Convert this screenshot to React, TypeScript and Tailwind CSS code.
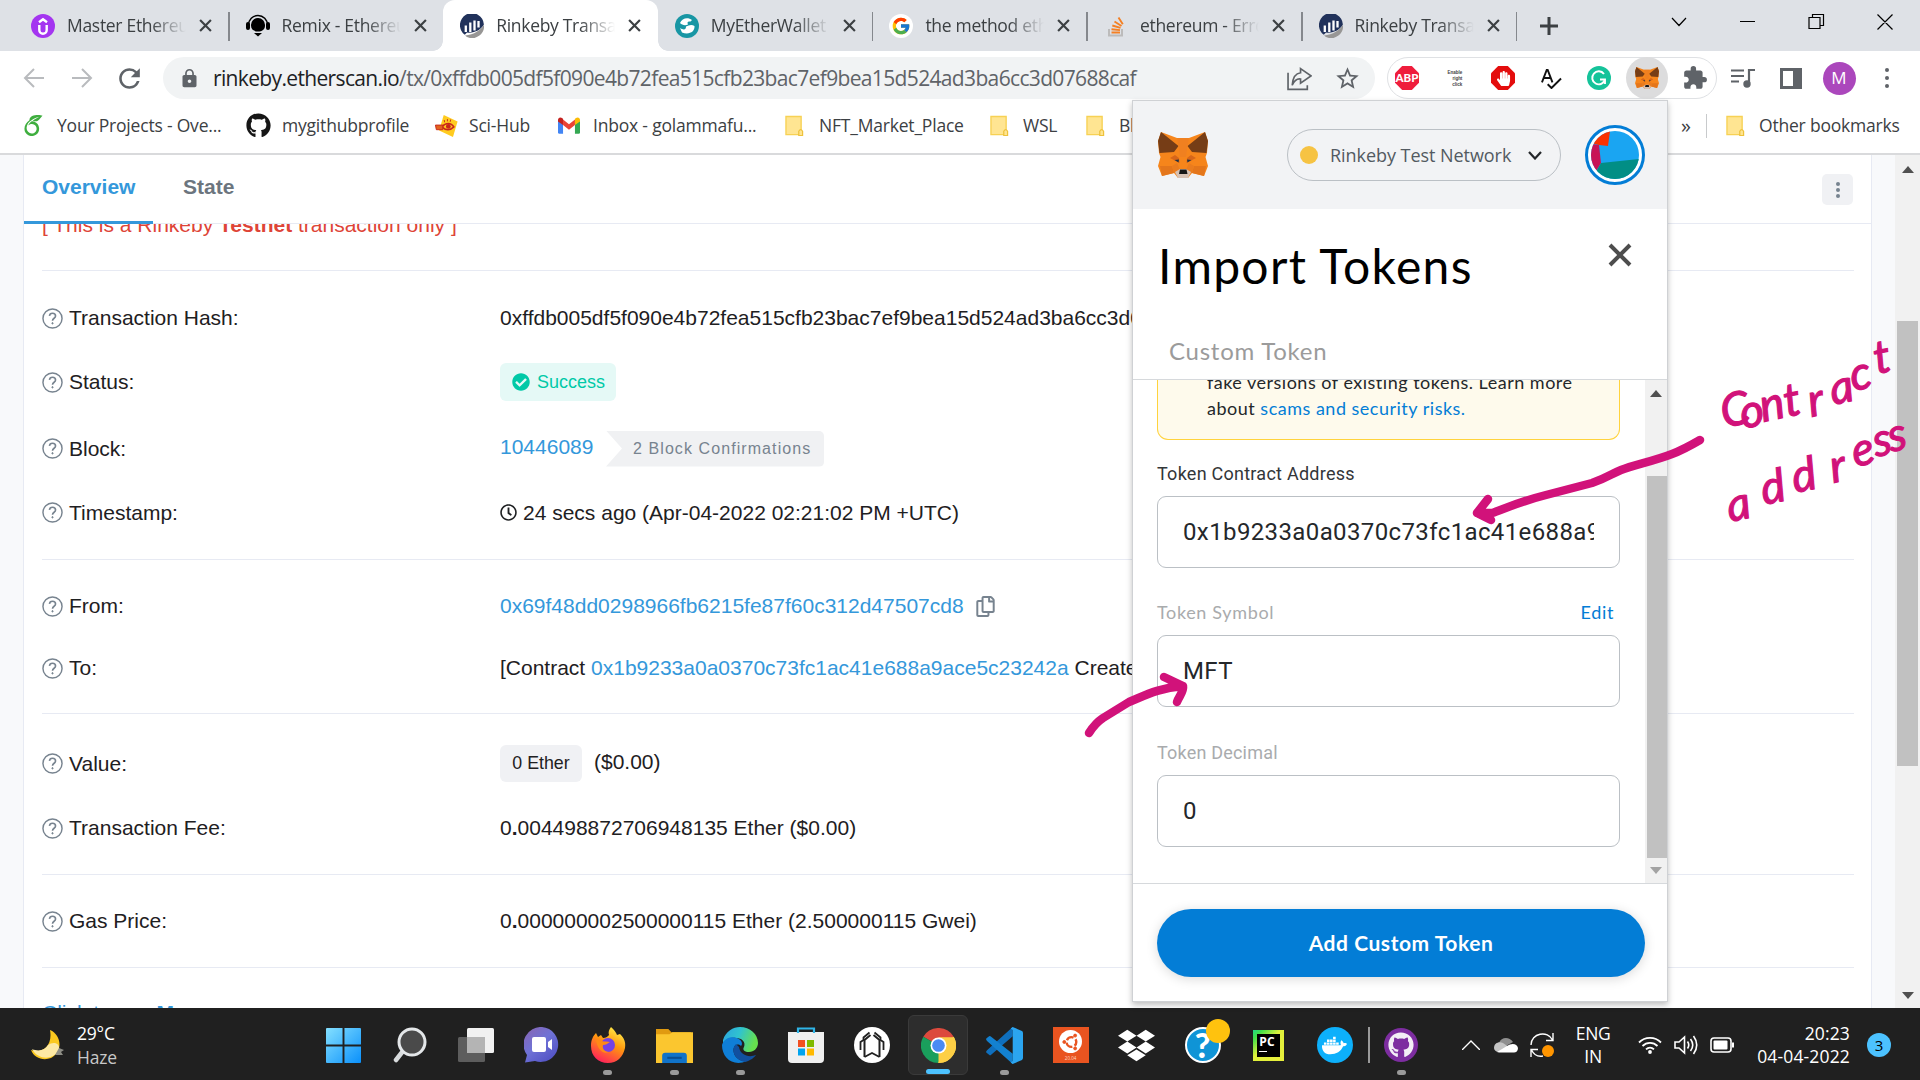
import React from "react";
import { FaGithub, FaDropbox, FaDocker, FaHandPaper, FaCheckCircle, FaRegCopy, FaRegClock } from "react-icons/fa";
import { FcGoogle } from "react-icons/fc";
import { SiOverleaf } from "react-icons/si";
import { MdExtension, MdLock, MdRefresh, MdStarBorder } from "react-icons/md";

const UI = "font-['Open_Sans','Noto_Sans',sans-serif]";

/* ---------- logos ---------- */

function Fox({ className }: { className: string }) {
  return (
    <svg viewBox="0 0 50 46" className={className} preserveAspectRatio="none">
      <path d="M3 0 19 6H31L47 0 50 9 49 21 47.500 25 50 34 46 44 34 41 30 46H20L16 41 4 44 0 34 2.500 25 1 21 0 9Z" fill="#f6851b" />
      <path d="M3 0 20.500 14 16 20 1.500 21 0 9ZM47 0 29.500 14 34 20 48.500 21 50 9Z" fill="#763d16" />
      <path d="M19 6H31L29.500 14 28 25H22L20.500 14Z" fill="#f08020" />
      <path d="M12 26 17 23 21 26 21.500 31ZM38 26 33 23 29 26 28.500 31Z" fill="#d7661a" />
      <path d="M2 34H14L16 41 4 44ZM48 34H36L34 41 46 44Z" fill="#e4761b" />
      <path d="M14 34 19 31 22 38 16 41ZM36 34 31 31 28 38 34 41Z" fill="#ea7c1e" />
      <path d="M16.500 28 21 27.500 20.500 30.500ZM33.500 28 29 27.500 29.500 30.500Z" fill="#233447" />
      <path d="M17 40 22 37H28L33 40 30 46H20Z" fill="#d7c1b3" />
      <path d="M22 37.500H28.500L29.500 42H21Z" fill="#161616" />
    </svg>
  );
}

function Etherscan() {
  return (
    <svg viewBox="0 0 24 24" className="size-6">
      <path d="M4.800 20.800A12 12 0 1 1 23.900 10.500C21 16 14 19.500 7 18.500Z" fill="#21325b" />
      <path d="M5 21.500C14 21 21 16 24 10.800A12 12 0 0 1 7 23Z" fill="#979695" />
      <path d="M5.800 18V11.500M10.300 18V8.500M14.500 16.500V6.500M18.500 13.500V7" stroke="#fff" strokeWidth="2.300" />
    </svg>
  );
}

function Folder() {
  return (
    <svg viewBox="0 0 20 22" className="h-[22px] w-[19px] shrink-0">
      <path d="M1 1H17V20H1Z" fill="#ffe592" stroke="#f7d154" strokeWidth="1.400" />
      <path d="M14.500 21V16.500Q16.500 13 18.500 16.500V21Z" fill="#ffe592" stroke="#eec23c" strokeWidth="1.300" />
    </svg>
  );
}

function Udemy() {
  return (
    <svg viewBox="0 0 24 24" className="size-6">
      <circle cx="12" cy="12" r="12" fill="#a435f0" />
      <path d="M8.300 11v5a3.700 3.700 0 0 0 7.400 0v-5M8 8.300 12 5.300 16 8.300" stroke="#fff" strokeWidth="2.400" fill="none" />
    </svg>
  );
}

function Remix() {
  return (
    <svg viewBox="0 0 24 24" className="size-6">
      <path d="M12 4a7 7 0 0 1 7 7.500c0 4-3 6-7 6s-7-2-7-6A7 7 0 0 1 12 4Z" />
      <path d="M2.500 11a9.500 9.500 0 0 1 19 0" stroke="#000" strokeWidth="1.500" fill="none" />
      <rect y="8" width="4" height="8" rx="2" />
      <rect x="20" y="8" width="4" height="8" rx="2" />
      <path d="M8 19 12 22.500 16 19Z" />
    </svg>
  );
}

function Mew() {
  return (
    <svg viewBox="0 0 24 24" className="size-6">
      <circle cx="12" cy="12" r="12" fill="#1896a4" />
      <path d="M5 9C7 4 13 3 17 6L15.500 7.500C12.500 7 12 8 13 10.500 10 12 7 11 5 9ZM19.500 12C20 18 14 21 7 18.500L5 14C9 16.500 11 15.500 11 12.500 14 11 17 10.500 19.500 12Z" fill="#fff" />
    </svg>
  );
}

function Gmail() {
  return (
    <svg viewBox="0 0 24 18" className="h-[17px] w-[22px] shrink-0">
      <path d="M0 3V16.500Q0 18 1.500 18H5.500V7.500Z" fill="#4285f4" />
      <path d="M24 3V16.500Q24 18 22.500 18H18.500V7.500Z" fill="#34a853" />
      <path d="M5.500 2.500 12 7.500 18.500 2.500V8.500L12 13.500 5.500 8.500Z" fill="#ea4335" />
      <path d="M0 3C0 .3 2.500-.6 4.500.9L5.500 1.800V8.500L0 4.500Z" fill="#c5221f" />
      <path d="M24 3C24 .3 21.500-.6 19.500.9L18.500 1.800V8.500L24 4.500Z" fill="#fbbc04" />
    </svg>
  );
}

function SciHub() {
  return (
    <svg viewBox="0 0 24 26" className="h-[24px] w-[25px] shrink-0">
      <path d="M9 1 24 8 19 25 4 18Z" fill="#ffcb1f" />
      <path d="M7 14C11 9 17 9 20 14 16 18 11 18 7 14Z" fill="none" stroke="#c8261b" strokeWidth="1.700" />
      <circle cx="14" cy="13.500" r="2.600" fill="#c8261b" />
      <path d="M0 12H8V17H1ZM10 9 9.500 6.500M13 8V5.500M16 8.500 16.500 6" fill="#e2641d" stroke="#c8261b" />
    </svg>
  );
}

/* ---------- browser chrome ---------- */

const tabs = [
  { icon: <Udemy />, title: "Master Ethereum" },
  { icon: <Remix />, title: "Remix - Ethereum" },
  { icon: <Etherscan />, title: "Rinkeby Transaction", active: true },
  { icon: <Mew />, title: "MyEtherWallet |" },
  {
    icon: (
      <span className="flex size-6 items-center justify-center rounded-full bg-white">
        <FcGoogle size={20} />
      </span>
    ),
    title: "the method eth_",
  },
  {
    icon: (
      <svg viewBox="0 0 24 24" className="size-6">
        <path d="M5 15V21.500H18V15" fill="none" stroke="#bcbbbb" strokeWidth="2" />
        <path d="M7.500 18.500H16M7.500 15.200 16 16.100M8.300 11.500 16.500 13.800M10.500 7.500 17.500 12M14.500 3.500 18.800 10.300" stroke="#f48024" strokeWidth="1.900" />
      </svg>
    ),
    title: "ethereum - Error",
  },
  { icon: <Etherscan />, title: "Rinkeby Transaction" },
];

function Close({ className = "size-3" }: { className?: string }) {
  return (
    <svg viewBox="0 0 12 12" className={className}>
      <path d="M1 1 11 11M11 1 1 11" stroke="currentColor" strokeWidth="2" />
    </svg>
  );
}

function TabStrip() {
  return (
    <div className="flex h-[51px] bg-[#dee1e6] pl-[14px]">
      {tabs.map((t, i) => (
        <div
          key={i}
          className={`relative flex h-full w-[214.600px] shrink-0 items-center pl-[17px] ${t.active ? "rounded-t-xl bg-white" : ""}`}
        >
          {t.active && (
            <>
              <i className="absolute bottom-0 -left-[10px] size-[10px] bg-[radial-gradient(circle_at_0_0,transparent_9.500px,#fff_10px)]" />
              <i className="absolute -right-[10px] bottom-0 size-[10px] bg-[radial-gradient(circle_at_100%_0,transparent_9.500px,#fff_10px)]" />
            </>
          )}
          {t.icon}
          <span
            className={`ml-[12px] w-[119px] overflow-hidden text-[17.500px] tracking-[-0.300px] whitespace-nowrap text-[#3c4043] [mask-image:linear-gradient(90deg,#000_70%,transparent)] ${UI}`}
          >
            {t.title}
          </span>
          <Close className="ml-[13px] size-[13px] text-[#3c4043]" />
          {i !== 1 && i !== 2 && <span className="absolute top-3 right-[-1px] h-[29px] w-[1.500px] bg-[#85888d]" />}
        </div>
      ))}
      <svg viewBox="0 0 18 18" className="mt-[17px] ml-[24px] size-[18px]">
        <path d="M9 0V18M0 9H18" stroke="#3c4043" strokeWidth="3" />
      </svg>
      <svg viewBox="0 0 240 20" className="mt-3 ml-[102px] h-5 w-[240px]" fill="none" stroke="#000" strokeWidth="1.200">
        <path d="M12 6 19 13.500 26 6M80 9.500H95M149 5.500H160V16.500H149ZM152.500 5.500V2.500H163.500V13.500H160M217.500 2.500 232.500 17.500M232.500 2.500 217.500 17.500" />
      </svg>
    </div>
  );
}

function Slot({ children, className = "" }: { children: React.ReactNode; className?: string }) {
  return <span className={`flex h-[42px] w-[48px] shrink-0 items-center justify-center ${className}`}>{children}</span>;
}

function Toolbar() {
  return (
    <div className="flex h-[54px] items-center bg-white text-[#5f6368]">
      <div className="flex w-[163px] items-center pl-[23px]">
        <svg viewBox="0 0 22 20" className="h-[20px] w-[22px]" fill="none" stroke="#b9bbbe" strokeWidth="2">
          <path d="M21 10H2M11 1 2 10 11 19" />
        </svg>
        <svg viewBox="0 0 22 20" className="ml-[26px] h-[20px] w-[22px]" fill="none" stroke="#b9bbbe" strokeWidth="2">
          <path d="M1 10H20M11 1 20 10 11 19" />
        </svg>
        <MdRefresh size={31} className="ml-[21px]" />
      </div>
      <div className="flex h-[42px] w-[1212px] items-center rounded-full bg-[#f1f3f4] pl-[16px]">
        <MdLock size={21} />
        <span className={`mt-[1px] ml-[13px] w-[1062px] text-[21px] tracking-[-0.650px] whitespace-nowrap ${UI}`}>
          <span className="text-[#202124]">rinkeby.etherscan.io</span>
          /tx/0xffdb005df5f090e4b72fea515cfb23bac7ef9bea15d524ad3ba6cc3d07688caf
        </span>
        <Slot>
          <svg viewBox="0 0 24 24" className="size-[25px]" fill="none" stroke="currentColor" strokeWidth="1.600">
            <path d="M1 6.500V22.500H19.500V18.500M13 2.500 23 9.500 13 16.500V12.500C10 12 7 14 5 18.500 5.500 12 8 7 13 6.500Z" />
          </svg>
        </Slot>
        <Slot>
          <MdStarBorder size={27} />
        </Slot>
      </div>
      <div className="ml-[12px] flex h-[42px] w-[330px] items-center rounded-full border-[1.500px] border-[#dfe1e4]">
        <span className="-ml-[5px] flex">
          <Slot>
            <span className="flex size-6 items-center justify-center bg-[#ef1d3c] font-['Lato',sans-serif] text-[11.500px] font-black text-white [clip-path:polygon(30%_0,70%_0,100%_30%,100%_70%,70%_100%,30%_100%,0_70%,0_30%)]">
              ABP
            </span>
          </Slot>
          <Slot>
            <span className="mt-[2px] text-right font-['Liberation_Sans',sans-serif] text-[4.500px] leading-[6px] font-bold text-[#444]">
              Enable
              <br />
              right
              <br />
              click
            </span>
          </Slot>
          <Slot>
            <span className="flex size-6 items-center justify-center bg-[#e40d0d] text-white [clip-path:polygon(30%_0,70%_0,100%_30%,100%_70%,70%_100%,30%_100%,0_70%,0_30%)]">
              <FaHandPaper size={15} />
            </span>
          </Slot>
          <Slot>
            <svg viewBox="0 0 22 22" className="size-[21px]" fill="none" stroke="#111" strokeWidth="2">
              <path d="M1 15 6 2H7L12 15M3 10.500H10M7 17 11 21 21 11" />
            </svg>
          </Slot>
          <Slot>
            <svg viewBox="0 0 24 24" className="size-6">
              <circle cx="12" cy="12" r="12" fill="#15c39a" />
              <path d="M17 8A6.500 6.500 0 1 0 18 13.500M13 13.500H18V18" fill="none" stroke="#fff" strokeWidth="1.900" />
            </svg>
          </Slot>
          <Slot>
            <span className="flex size-[42px] shrink-0 items-center justify-center rounded-full bg-[#dcdcdd]">
              <Fox className="h-[22px] w-6" />
            </span>
          </Slot>
          <Slot>
            <MdExtension size={26} />
          </Slot>
        </span>
      </div>
      <Slot className="ml-[2px]">
        <svg viewBox="0 0 24 20" className="h-[20px] w-[24px]" stroke="currentColor" strokeWidth="2.200" fill="none">
          <path d="M0 2.500H13M0 8H13M0 13.500H8M18 15V2H24" />
          <circle cx="16" cy="16" r="2.600" fill="currentColor" />
        </svg>
      </Slot>
      <Slot>
        <span className="h-[21px] w-[22px] border-[3px] border-r-[9px] border-[#5f6368]" />
      </Slot>
      <Slot>
        <span className={`flex size-[33px] items-center justify-center rounded-full bg-[#ab47bc] text-[17px] text-white ${UI}`}>M</span>
      </Slot>
      <Slot>
        <span className="flex flex-col gap-[4px]">
          <i className="size-[4px] rounded-full bg-[#5f6368]" />
          <i className="size-[4px] rounded-full bg-[#5f6368]" />
          <i className="size-[4px] rounded-full bg-[#5f6368]" />
        </span>
      </Slot>
    </div>
  );
}

function Mark({ icon, iconW, textW, children }: { icon: React.ReactNode; iconW: string; textW: string; children: string }) {
  return (
    <>
      <span className={`flex shrink-0 items-center ${iconW}`}>{icon}</span>
      <span className={`shrink-0 whitespace-nowrap ${textW}`}>{children}</span>
    </>
  );
}

function Bookmarks() {
  return (
    <div className={`flex h-[50px] items-center border-b-2 border-[#d9dadc] bg-white pb-[7px] pl-[23px] text-[17.500px] tracking-[-0.200px] text-[#3c4043] ${UI}`}>
      <Mark icon={<SiOverleaf size={21} color="#3fae3f" />} iconW="w-[34px]" textW="w-[189px]">
        Your Projects - Ove...
      </Mark>
      <Mark icon={<FaGithub size={25} color="#161616" />} iconW="w-[36px]" textW="w-[152px]">
        mygithubprofile
      </Mark>
      <Mark icon={<SciHub />} iconW="w-[35px]" textW="w-[89px]">
        Sci-Hub
      </Mark>
      <Mark icon={<Gmail />} iconW="w-[35px]" textW="w-[192px]">
        Inbox - golammafu...
      </Mark>
      <Mark icon={<Folder />} iconW="w-[34px]" textW="w-[171px]">
        NFT_Market_Place
      </Mark>
      <Mark icon={<Folder />} iconW="w-[33px]" textW="w-[63px]">
        WSL
      </Mark>
      <Mark icon={<Folder />} iconW="w-[33px]" textW="w-[562px]">
        Block
      </Mark>
      <span className="w-[25px] text-[20px]">»</span>
      <span className="mr-[19px] h-[24px] w-px shrink-0 bg-[#c8cacc]" />
      <Mark icon={<Folder />} iconW="w-[33px]" textW="w-[150px]">
        Other bookmarks
      </Mark>
    </div>
  );
}

/* ---------- transaction page ---------- */

function Row({ label, h, children }: { label: string; h: string; children: React.ReactNode }) {
  return (
    <div className={`flex items-center whitespace-nowrap ${h}`}>
      <div className="flex w-[458px] shrink-0 items-center">
        <svg viewBox="0 0 22 22" className="mr-[6px] size-[21px]" fill="none" stroke="#77838f">
          <circle cx="11" cy="11" r="10" strokeWidth="1.500" />
          <path d="M7.800 8.300C8 6.500 9.500 5.500 11 5.500S14.200 6.500 14.200 8.500C14.200 10.700 11 10.800 11 13.300" strokeWidth="1.700" />
          <circle cx="11" cy="16" r=".7" strokeWidth="1" fill="#77838f" />
        </svg>
        {label}
      </div>
      {children}
    </div>
  );
}

function Page() {
  return (
    <div className="flex h-[853px] overflow-hidden bg-[#f8f9fb] pl-[23px] font-['Liberation_Sans',Arial,sans-serif] text-[21px] text-[#1e2022]">
      <div className="flex w-[1849px] flex-col border-x border-[#e7eaf3] bg-white">
        <div className="flex h-[69px] shrink-0 items-stretch border-b border-[#e7eaf3] text-[21px] font-bold">
          <div className="-mb-px w-[129px] border-b-[3px] border-[#3498db] pt-[16px] pl-[18px] text-[#3498db]">Overview</div>
          <div className="w-[1648px] pt-[16px] pl-[30px] text-[#6c757e]">State</div>
          <div className="mt-[19px] ml-[21px] flex h-[31px] w-[31px] flex-col items-center justify-center gap-[2px] rounded-[5px] bg-[#f0f1f4]">
            <i className="size-[4px] rounded-full bg-[#77838f]" />
            <i className="size-[4px] rounded-full bg-[#77838f]" />
            <i className="size-[4px] rounded-full bg-[#77838f]" />
          </div>
        </div>
        <div className="mr-[17px] ml-[18px] flex flex-col [&>section]:border-b [&>section]:border-[#e7eaf3]">
          <section className="h-[47px] overflow-hidden">
            <p className="-mt-[11px] text-[21px] leading-6 text-[#de4437]">
              [ This is a Rinkeby <b>Testnet</b> transaction only ]
            </p>
          </section>
          <section className="h-[289px] pt-[15px]">
            <Row label="Transaction Hash:" h="h-[64px]">
              0xffdb005df5f090e4b72fea515cfb23bac7ef9bea15d524ad3ba6cc3d07688caf
            </Row>
            <Row label="Status:" h="h-[64px]">
              <span className="flex h-[38px] w-[116px] items-center rounded-md bg-[#e5f9f6] pl-[12px] text-[18px] text-[#00c9a7]">
                <FaCheckCircle size={18} className="mr-[7px]" />
                Success
              </span>
            </Row>
            <Row label="Block:" h="h-[69px]">
              <span className="-mt-[3px] w-[106px] text-[#3498db]">10446089</span>
              <span className="flex h-[36px] w-[218px] items-center rounded-r-[5px] bg-[#f0f1f3] pl-[27px] text-[16px] tracking-[1.080px] text-[#77838f] [clip-path:polygon(0_0,100%_0,100%_100%,0_100%,16px_50%)]">
                2 Block Confirmations
              </span>
            </Row>
            <Row label="Timestamp:" h="h-[59px]">
              <FaRegClock size={17} className="mr-[6px]" />
              24 secs ago (Apr-04-2022 02:21:02 PM +UTC)
            </Row>
          </section>
          <section className="h-[154px] pt-[15px]">
            <Row label="From:" h="h-[62px]">
              <span className="text-[#3498db]">0x69f48dd0298966fb6215fe87f60c312d47507cd8</span>
              <FaRegCopy size={21} className="ml-[11px] text-[#77838f]" />
            </Row>
            <Row label="To:" h="h-[62px]">
              <span>
                [Contract <span className="text-[#3498db]">0x1b9233a0a0370c73fc1ac41e688a9ace5c23242a</span> Created]
              </span>
            </Row>
          </section>
          <section className="h-[161px] pt-[17px]">
            <Row label="Value:" h="h-[65px]">
              <span className="mr-[12px] flex h-[37px] w-[82px] items-center justify-center rounded-md bg-[#f0f1f4] text-[17.800px]">0 Ether</span>
              <span className="-mt-[4px]">($0.00)</span>
            </Row>
            <Row label="Transaction Fee:" h="h-[64px]">
              <span>
                0<b>.</b>004498872706948135 Ether ($0.00)
              </span>
            </Row>
          </section>
          <section className="h-[93px] pt-[15px]">
            <Row label="Gas Price:" h="h-[62px]">
              <span>
                0<b>.</b>000000002500000115 Ether (2.500000115 Gwei)
              </span>
            </Row>
          </section>
          <p className="mt-[33px] leading-6 text-[#3498db]">
            Click to see <b>More</b> <span className="ml-2">↓</span>
          </p>
        </div>
      </div>
      <div className="ml-auto flex w-[25px] flex-col items-center bg-[#f1f1f1]">
        <i className="mt-[11px] border-x-[6px] border-b-[7px] border-x-transparent border-b-[#505050]" />
        <i className="mt-[148px] h-[445px] w-[21px] bg-[#c1c1c1]" />
        <i className="mt-auto mb-[9px] border-x-[6px] border-t-[7px] border-x-transparent border-t-[#505050]" />
      </div>
    </div>
  );
}

/* ---------- wallet popup ---------- */

function Field({ value }: { value: string }) {
  return (
    <div className="flex h-[72px] w-[463px] shrink-0 items-center rounded-[9px] border border-[#bbc0c5] bg-white px-[25px] font-['Roboto',sans-serif] text-[24px] tracking-[0.380px] text-[#24272a]">
      <span className="overflow-hidden whitespace-nowrap">{value}</span>
    </div>
  );
}

function Wallet() {
  return (
    <div className="absolute top-[100px] left-[1132px] flex h-[902px] w-[536px] flex-col border border-[#cfd1d4] bg-white font-['Lato',sans-serif] shadow-[0_3px_6px_rgba(0,0,0,0.25)]">
      <div className="flex h-[108px] shrink-0 items-center bg-[#f2f3f5] pl-[25px]">
        <Fox className="h-[46px] w-[50px]" />
        <div className="ml-[79px] flex h-[52px] w-[274px] items-center rounded-full border border-[#bbc0c5] pl-[12px]">
          <i className="size-[18px] rounded-full bg-[#f6c343]" />
          <span className={`ml-[12px] w-[181px] text-[18px] tracking-[-0.050px] whitespace-nowrap text-[#535a61] ${UI}`}>Rinkeby Test Network</span>
          <svg viewBox="0 0 14 9" className="ml-[17px] h-[9px] w-[14px]">
            <path d="M1 1 7 7.500 13 1" fill="none" stroke="#24272a" strokeWidth="2.200" />
          </svg>
        </div>
        <span className="ml-[24px] flex size-[60px] items-center justify-center rounded-full border-[3px] border-[#037dd6] bg-white">
          <svg viewBox="0 0 48 48" className="size-12 rounded-full">
            <path d="M0 0H48V48H0Z" fill="#1aa5f2" />
            <path d="M0 0H19L17 15 8 14 0 12Z" fill="#fa3200" />
            <path d="M0 13 8 14 10 32 4 42 0 40Z" fill="#c81456" />
            <path d="M10 32 48 28V48H0L6 39Z" fill="#018e85" />
          </svg>
        </span>
      </div>
      <div className="flex h-[171px] shrink-0 flex-col border-b border-[#d6d9dc] pl-[25px]">
        <div className="flex justify-between pt-[26px] pr-[35px]">
          <h1 className="text-[48px] leading-[62px] tracking-[1.300px] text-black">Import Tokens</h1>
          <Close className="mt-[8px] size-[24px] text-[#4d4d4d]" />
        </div>
        <p className="mt-[39px] pl-[11px] text-[24px] leading-[30px] tracking-[0.750px] text-[#9b9b9b]">Custom Token</p>
      </div>
      <div className="flex h-[504px] shrink-0 border-b border-[#d6d9dc]">
        <div className="flex w-[512px] flex-col overflow-hidden pl-[24px]">
          <div className="h-[60px] w-[463px] shrink-0 overflow-hidden rounded-b-[11px] border border-t-0 border-[#ffd33d] bg-[#fefaec] pl-[49px] text-[18px] text-[#24272a]">
            <p className="-mt-[11px] leading-[26px] tracking-[0.500px] whitespace-nowrap">
              fake versions of existing tokens. Learn more
              <br />
              about <span className="text-[#037dd6]">scams and security risks.</span>
            </p>
          </div>
          <p className="mt-[22px] mb-[10px] font-['Roboto',sans-serif] text-[18px] leading-6 tracking-[0.250px] text-[#333639]">Token Contract Address</p>
          <Field value="0x1b9233a0a0370c73fc1ac41e688a9ace5c23242a" />
          <p className="mt-[32px] mb-[11px] flex w-[457px] justify-between text-[18px] leading-6 tracking-[0.650px] text-[#a9abad]">
            Token Symbol <span className="text-[#037dd6]">Edit</span>
          </p>
          <Field value="MFT" />
          <p className="mt-[34px] mb-[10px] font-['Roboto',sans-serif] text-[18px] leading-6 tracking-[0.200px] text-[#a9abad]">Token Decimal</p>
          <Field value="0" />
        </div>
        <div className="flex w-[22px] flex-col items-center bg-[#f1f1f1]">
          <i className="mt-[10px] border-x-[6px] border-b-[7px] border-x-transparent border-b-[#505050]" />
          <i className="mt-[79px] ml-[2px] h-[382px] w-[20px] bg-[#c1c1c1]" />
          <i className="mt-[9px] border-x-[6px] border-t-[7px] border-x-transparent border-t-[#a3a3a3]" />
        </div>
      </div>
      <div className="mt-[25px] ml-[24px] flex h-[68px] w-[488px] items-center justify-center rounded-full bg-[#037dd6] text-[21px] font-bold tracking-[0.550px] text-white shadow-[0_2px_12px_rgba(0,0,0,0.15)]">
        Add Custom Token
      </div>
    </div>
  );
}

/* ---------- pen annotations ---------- */

function Ink() {
  return (
    <svg viewBox="0 0 1920 1080" className="pointer-events-none absolute top-0 left-0 h-[1080px] w-[1920px]">
      <g fill="none" stroke="#d1127a" strokeWidth="8.500" strokeLinecap="round" strokeLinejoin="round">
        <path d="M1700 440C1688 447 1680 451 1672 454 1654 461 1634 465 1621 470 1611 474 1607 478 1592 483L1546 495C1522 501 1506 508 1492 513L1477 513 1488 499M1477 513 1491 520" />
        <path d="M1089 733C1094 725 1097 722 1103 718L1129 702C1144 696 1158 688 1183 686L1164 677M1183 686C1184 692 1179 696 1177 702" />
      </g>
      <g fill="#d1127a" stroke="#d1127a" strokeWidth="1.200" fontFamily="Lato, sans-serif" fontStyle="italic" fontSize="46">
        <text x="1724 1743 1763 1787 1811 1833 1853 1877" y="428 429 422 417 417 405 391 374" rotate="-12">
          Contract
        </text>
        <text x="1730 1764 1795 1833 1855 1876 1891" y="522 505 493 483 467 457 452" rotate="-12">
          address
        </text>
      </g>
    </svg>
  );
}

/* ---------- taskbar ---------- */

function TaskIcon({ children, dot, active }: { children: React.ReactNode; dot?: boolean; active?: boolean }) {
  return (
    <div className="flex w-[66.100px] shrink-0 justify-center">
      <div className={`relative flex h-[60px] w-[60px] items-center justify-center rounded-md ${active ? "border border-[#3a3a3a] bg-[#2d2d2d]" : ""}`}>
        {children}
        {dot && <i className="absolute bottom-0 h-[5px] w-[9px] rounded-full bg-[#9a9a9a]" />}
        {active && <i className="absolute bottom-0 h-[5px] w-[24px] rounded-full bg-[#4cc2ff]" />}
      </div>
    </div>
  );
}

function Taskbar() {
  return (
    <div className={`flex h-[72px] items-center bg-[#202020] pt-[2px] text-white ${UI}`}>
      <svg viewBox="0 0 34 30" className="ml-[31px] h-[30px] w-[34px]">
        <path d="M19 0C31 5 32 22 20 28 12 31 3 28 0 20 11 24 22 16 19 0Z" fill="#fbc91f" />
        <path d="M1 19C8 22 14 20 17 15 22 11 29 13 28 19 25 29 8 32 1 19Z" fill="#fde9a4" />
        <path d="M28 18 33 20 30 22 32 25 24 25Z" fill="#8d8d85" />
      </svg>
      <div className="ml-[12px] w-[100px] text-[17.500px] leading-[24px] tracking-[-0.200px]">
        29°C
        <br />
        <span className="text-[#c8c8c8]">Haze</span>
      </div>
      <div className="ml-[133.500px] flex items-center">
        <TaskIcon>
          <svg viewBox="0 0 36 36" className="size-[35px]">
            <defs>
              <linearGradient id="win" x2="1" y2="1">
                <stop stopColor="#84e0ff" />
                <stop offset="1" stopColor="#0a90fb" />
              </linearGradient>
            </defs>
            <path d="M0 1Q0 0 1 0H17V17H0ZM19 0H35Q36 0 36 1V17H19ZM0 19H17V36H1Q0 36 0 35ZM19 19H36V35Q36 36 35 36H19Z" fill="url(#win)" />
          </svg>
        </TaskIcon>
        <TaskIcon>
          <svg viewBox="0 0 34 36" className="h-[36px] w-[34px]">
            <path d="M10 24 3 33" stroke="#d8dbdd" strokeWidth="4.500" strokeLinecap="round" />
            <circle cx="19" cy="15" r="13" fill="#4a4a4a" stroke="#e4e7e9" strokeWidth="3" />
          </svg>
        </TaskIcon>
        <TaskIcon>
          <svg viewBox="0 0 38 36" className="h-[36px] w-[38px]">
            <rect y="10" x="1" width="27" height="25" rx="1.500" fill="#5d5d5d" />
            <rect x="10" y="1" width="27" height="25" rx="1.500" fill="#f1f1f1" />
            <path d="M10 10H28V26H10Z" fill="#b4b4b4" />
          </svg>
        </TaskIcon>
        <TaskIcon>
          <svg viewBox="0 0 36 36" className="size-[36px]">
            <defs>
              <linearGradient id="chat" x2=".8" y2="1">
                <stop stopColor="#8a64b0" />
                <stop offset=".5" stopColor="#6f72d6" />
                <stop offset="1" stopColor="#5050c4" />
              </linearGradient>
            </defs>
            <path d="M18 0A17.500 17.500 0 1 1 11 34L1 35.500 3 28A17.500 17.500 0 0 1 18 0Z" fill="url(#chat)" />
            <rect x="8" y="10" width="14" height="15" rx="2" fill="#fff" />
            <path d="M24 15 28 12V23L24 20Z" fill="#fff" />
          </svg>
        </TaskIcon>
        <TaskIcon dot>
          <svg viewBox="0 0 36 36" className="size-[36px]">
            <defs>
              <linearGradient id="ff" x1=".8" x2=".3" y2="1">
                <stop stopColor="#fff44f" />
                <stop offset=".45" stopColor="#ff980e" />
                <stop offset="1" stopColor="#ff1f5c" />
              </linearGradient>
            </defs>
            <path d="M21 0C24 3 26 5 27 8L30 7C34 11 36 15 35 21 33 30 27 36 18 36 8 36 1 29 1 19 1 13 3 9 6 6L8 10 11 8 13 11C16 11 18 9 19 8 18 5 19 3 21 0Z" fill="url(#ff)" />
            <circle cx="18" cy="18" r="7" fill="#7542e5" />
            <path d="M6 12C11 15 15 14 20 15 17 17 16 18 13 18 12 22 15 25 19 25 13 28 7 22 6 12Z" fill="#ff8a16" />
          </svg>
        </TaskIcon>
        <TaskIcon dot>
          <svg viewBox="0 0 36 34" className="h-[35px] w-[37px]">
            <path d="M0 1H12L15 4H34V12H0Z" fill="#e09a10" />
            <path d="M0 6H13L16 4H36V34H0Z" fill="#fbc62f" />
            <path d="M6 34V27Q6 24 9 24H27Q30 24 30 27V34Z" fill="#1173c9" />
            <path d="M11 29H25" stroke="#0a4f93" strokeWidth="2" />
          </svg>
        </TaskIcon>
        <TaskIcon dot>
          <svg viewBox="0 0 36 36" className="size-[36px]">
            <defs>
              <linearGradient id="edge" x2="1" y2=".3">
                <stop stopColor="#2ba3e0" />
                <stop offset=".5" stopColor="#30c3cf" />
                <stop offset="1" stopColor="#66e04e" />
              </linearGradient>
            </defs>
            <path d="M1 13C4 4 11 0 18 0 28 0 36 7 36 16 36 21 32 25 27 25 23 25 20 23 22 20 24 15 20 11 14 11 8 10 3 13 1 17Z" fill="url(#edge)" />
            <path d="M0 18C2 11 9 9 15 11 20 13 21 17 19 19 14 14 8 22 14 30 18 34 22 35 25 34 11 40 0 31 0 18Z" fill="#0f7fd8" />
            <path d="M14 17C8 23 13 33 23 35 28 34 33 30 34 28 27 31 18 28 17 20Z" fill="#11509f" />
          </svg>
        </TaskIcon>
        <TaskIcon>
          <svg viewBox="0 0 36 36" className="size-[36px]">
            <path d="M0 5H36V32Q36 36 32 36H4Q0 36 0 32Z" fill="#f0f0f0" />
            <path d="M10 6V1.500H26V6" fill="none" stroke="#2fb5e8" strokeWidth="2.200" />
            <path d="M10 13H17V20H10Z" fill="#f25022" />
            <path d="M19 13H26V20H19Z" fill="#7fba00" />
            <path d="M10 21.500H17V28.500H10Z" fill="#00a4ef" />
            <path d="M19 21.500H26V28.500H19Z" fill="#ffb900" />
          </svg>
        </TaskIcon>
        <TaskIcon>
          <svg viewBox="0 0 36 36" className="size-[36px]">
            <circle cx="18" cy="18" r="18" fill="#fff" />
            <path d="M15.500 5.500 9.500 10.500V13L6.500 15V23M20.500 5.500 26.500 10.500V13L29.500 15V23" fill="none" stroke="#202020" strokeWidth="1.800" />
            <path d="M16.500 8 10.500 13V30M19.500 8 25.500 13V30" fill="none" stroke="#202020" strokeWidth="2" />
            <path d="M10.500 30 18 26 25.500 30" fill="none" stroke="#202020" strokeWidth="1.800" />
          </svg>
        </TaskIcon>
        <TaskIcon active>
          <svg viewBox="0 0 36 36" className="size-[35px]">
            <path d="M18 18 2.400 9A18 18 0 0 1 33.600 9Z" fill="#dc4a3d" />
            <path d="M18 18 33.600 9A18 18 0 0 1 18 36L16 30Z" fill="#fdcf45" />
            <path d="M18 18 18 36A18 18 0 0 1 2.400 9Z" fill="#1a9f5c" />
            <path d="M18 9.500H33.900A18 18 0 0 1 17.500 36L25.500 22Z" fill="#fdcf45" />
            <circle cx="18" cy="18" r="8.200" fill="#fff" />
            <circle cx="18" cy="18" r="6.500" fill="#4a8af4" />
          </svg>
        </TaskIcon>
        <TaskIcon dot>
          <svg viewBox="0 0 36 36" className="size-[37px]">
            <path d="M26 0V9L5 27Q4 28 3 27L.5 25Q-.5 24 1 22.500Z" fill="#0f6fbd" />
            <path d="M1 13.500Q-.5 12 .5 11L3 9Q4 8.500 5 9.500L26 26V36Z" fill="#1381d0" />
            <path d="M26 0 35 4Q36 4.500 36 6V30Q36 31.500 35 32L26 36 24 34.500 26 33V3L24 1.500Z" fill="#2ba5f0" />
          </svg>
        </TaskIcon>
        <TaskIcon>
          <span className="flex size-[36px] flex-col items-center bg-[#e95420] pt-[3px]">
            <span className="flex size-[23px] items-center justify-center rounded-full bg-white text-[#e95420]">
              <svg viewBox="0 0 24 24" className="size-[22px]" fill="none" stroke="currentColor">
                <circle cx="12.500" cy="12" r="5.300" strokeWidth="2.600" strokeDasharray="8.500 2.600" strokeDashoffset="4" />
                <circle cx="4.700" cy="12" r="1.600" fill="currentColor" />
                <circle cx="16.500" cy="5" r="1.600" fill="currentColor" />
                <circle cx="16.500" cy="19" r="1.600" fill="currentColor" />
              </svg>
            </span>
            <span className="mt-[2px] text-[4.500px] leading-[6px] text-[#ffd9c9]">20.04</span>
          </span>
        </TaskIcon>
        <TaskIcon>
          <FaDropbox size={37} />
        </TaskIcon>
        <TaskIcon>
          <span className="relative flex size-[36px] items-center justify-center rounded-full border-2 border-white bg-[#0f94d6] font-['Lato',sans-serif] text-[34px] leading-none font-black">
            ?
            <i className="absolute -top-[10px] -right-[11px] size-[24px] rounded-full bg-[#ffc20e]" />
          </span>
        </TaskIcon>
        <TaskIcon>
          <span className="flex size-[31px] items-center justify-center bg-[linear-gradient(135deg,#21d789,#3fe04a_15%,#dff03a_45%,#e8ee3c)]">
            <span className="flex size-[23px] flex-col bg-black pl-[2px] text-[12px] leading-[15px] font-bold">
              PC
              <i className="mt-[2px] h-[1.500px] w-[8px] bg-white" />
            </span>
          </span>
        </TaskIcon>
        <TaskIcon>
          <span className="flex size-[36px] items-center justify-center rounded-full bg-[#0db0fb]">
            <FaDocker size={25} />
          </span>
        </TaskIcon>
        <div className="relative">
          <i className="absolute top-[12px] left-0 h-[36px] w-[1.500px] bg-[#9a9a9a]" />
          <TaskIcon dot>
            <span className="flex size-[34px] items-center justify-center overflow-hidden rounded-full bg-[#7d2da0]">
              <FaGithub size={26} color="#f3eef6" />
            </span>
          </TaskIcon>
        </div>
      </div>
      <svg viewBox="0 0 18 10" className="ml-[28px] h-[10px] w-[18px]" fill="none" stroke="#fff" strokeWidth="1.400">
        <path d="M0 10 9 1 18 10" />
      </svg>
      <svg viewBox="0 0 24 16" className="ml-[14px] h-[16px] w-[24px]">
        <path d="M5 6C7 0 15-1 19 5L12 9Z" fill="#8f8f8f" />
        <path d="M0 11C0 6 5 4 9 6L22 15H5C2 15 0 13 0 11Z" fill="#c4c4c4" />
        <path d="M3 15 13 9C17 6 23 6 24 11 24 14 22 15.500 20 15.500H5Z" fill="#fff" />
      </svg>
      <svg viewBox="0 0 24 24" className="ml-[12px] size-[24px]" fill="none" stroke="#fff" strokeWidth="1.400">
        <path d="M1 12C1 0 18-3 22.500 7M23 0V7.500H16M1 24V16.500H8M1.500 17C4 22 8 24 13 23" />
        <circle cx="18" cy="18" r="6" fill="#ff9500" stroke="none" />
      </svg>
      <div className="ml-[14px] w-[50px] text-center text-[17.500px] leading-[23px] tracking-[-0.300px]">
        ENG
        <br />
        IN
      </div>
      <svg viewBox="0 0 24 18" className="ml-[20px] h-[18px] w-[24px]" fill="none" stroke="#fff" strokeWidth="1.800">
        <path d="M1 6.500A15.500 15.500 0 0 1 23 6.500M4.500 10A10.500 10.500 0 0 1 19.500 10M8 13.300A6 6 0 0 1 16 13.300" />
        <circle cx="12" cy="16" r="1.900" fill="#fff" stroke="none" />
      </svg>
      <svg viewBox="0 0 24 20" className="ml-[12px] h-[20px] w-[24px]" fill="none" stroke="#fff" strokeWidth="1.600">
        <path d="M1 7H5L10.500 2V18L5 13H1ZM13.500 6.500Q16 10 13.500 13.500M16.500 4Q21 10 16.500 16M19.500 1Q26 10 19.500 19" />
      </svg>
      <svg viewBox="0 0 24 16" className="ml-[12px] h-[16px] w-[24px]">
        <rect x="1" y="1" width="20" height="14" rx="3" fill="none" stroke="#fff" strokeWidth="1.600" />
        <rect x="3.500" y="3.500" width="14" height="9" rx="1" fill="#fff" />
        <path d="M22 5.500H24V10.500H22Z" fill="#fff" />
      </svg>
      <div className="ml-auto text-right text-[17.500px] leading-[23px] tracking-[0.150px]">
        20:23
        <br />
        04-04-2022
      </div>
      <span className="mr-[29px] ml-[17px] flex size-[24px] items-center justify-center rounded-full bg-[#4cc2ff] text-[15px] text-black">3</span>
    </div>
  );
}

export default function App() {
  return (
    <div className="relative flex h-[1080px] w-[1920px] flex-col overflow-hidden bg-white">
      <TabStrip />
      <Toolbar />
      <Bookmarks />
      <Page />
      <Taskbar />
      <Wallet />
      <Ink />
    </div>
  );
}
